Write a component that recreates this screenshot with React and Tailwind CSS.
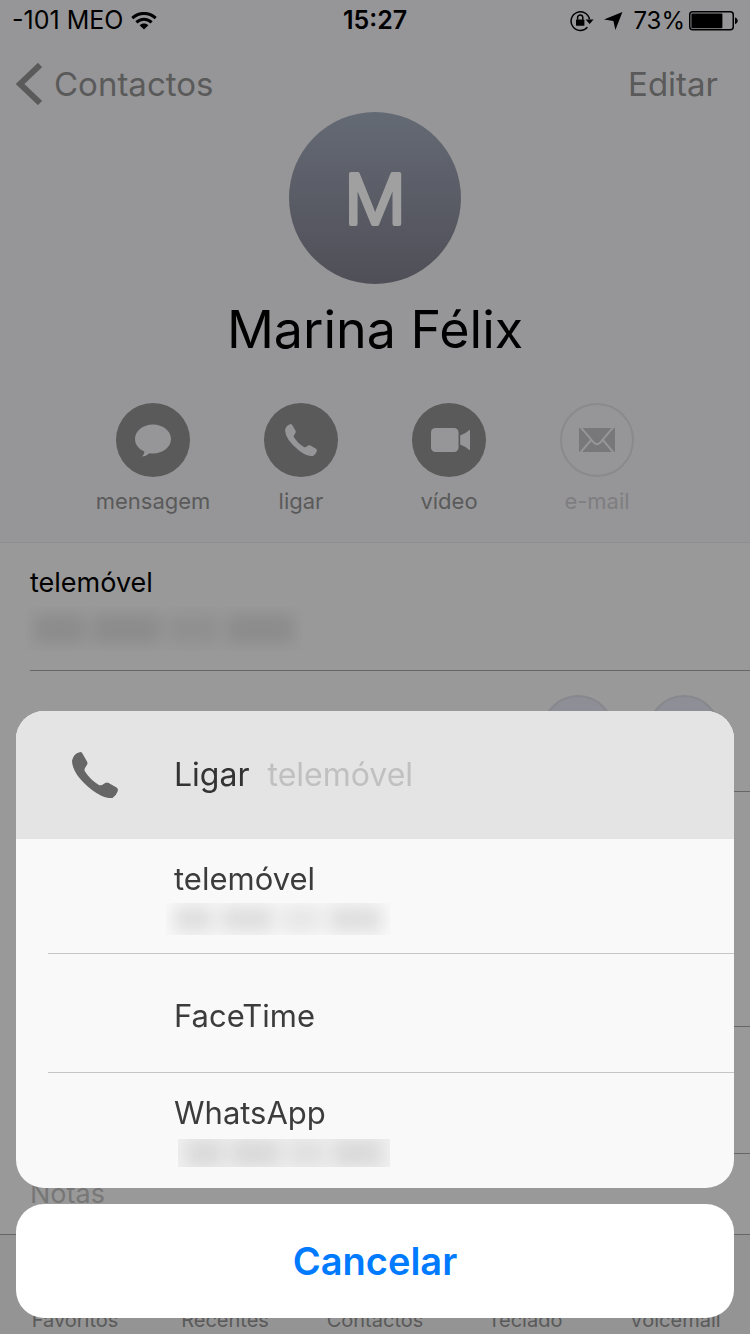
const actions = [
  { label: "mensagem", icon: MessageIcon },
  { label: "ligar", icon: PhoneIcon },
  { label: "vídeo", icon: VideoIcon },
  { label: "e-mail", icon: MailIcon, disabled: true },
];

const tabs = ["Favoritos", "Recentes", "Contactos", "Teclado", "Voicemail"];

function WifiIcon() {
  return (
    <svg width="26" height="18" viewBox="0 0 26 18" fill="none" stroke="black" strokeWidth="3">
      <path d="M1.3 6.2C8 -.2 18 -.2 24.7 6.2" />
      <path d="M5.4 10.4C9.8 6.2 16.2 6.2 20.6 10.4" />
      <path d="M13 17.6L8.6 13.2C11.2 10.9 14.8 10.9 17.4 13.2Z" fill="black" stroke="none" />
    </svg>
  );
}

function RotationLockIcon() {
  return (
    <svg width="24" height="22" viewBox="0 0 24 22" fill="none" stroke="black" strokeWidth="1.5">
      <path d="M17.4 17.2A9.3 9.3 0 1 1 19.5 9.4" />
      <path d="M15.6 9.6H23.6L19.6 14Z" fill="black" stroke="none" />
      <rect x="6" y="9.4" width="8.4" height="6.4" rx=".6" fill="black" stroke="none" />
      <path d="M7.6 9.8V7.6A2.6 2.6 0 0 1 12.8 7.6V9.8" />
    </svg>
  );
}

function LocationIcon() {
  return (
    <svg width="19" height="18" viewBox="0 0 19 18">
      <path d="M18.4 0L11.4 18L9.4 9L0 7.6Z" fill="black" />
    </svg>
  );
}

function BatteryIcon() {
  return (
    <svg width="49" height="20" viewBox="0 0 49 20">
      <rect x=".75" y=".75" width="43.5" height="18" rx="3" fill="none" stroke="black" strokeWidth="1.5" />
      <rect x="2.4" y="2.6" width="31" height="14.6" rx="1" fill="black" />
      <path d="M46 6.4C49.6 7.4 49.6 12.2 46 13.2Z" fill="black" />
    </svg>
  );
}

function MessageIcon() {
  return (
    <svg width="36" height="34" viewBox="0 0 36 34" fill="#969698">
      <path d="M18 1.5C28 1.5 36 8 36 16S28 30.5 18 30.5Q16 30.5 14.4 30.2Q11.2 33.4 7 33.6Q9.6 31.2 9.4 28.6C3.8 26.2 0 21.4 0 16C0 8 8 1.5 18 1.5Z" />
    </svg>
  );
}

function PhoneIcon({ size = 32, color = "#969698" }) {
  return (
    <svg width={size} height={size} viewBox="0 0 46 46" fill={color}>
      <path d="M7.6 .2Q9.4 -.2 10.3 1.3L15 9.5Q16 11.3 15 12.8L13 16Q12 17.6 13 19.5Q18 27.5 26.5 32.7Q28.3 33.8 30 33L33.2 31Q35 30 36.7 31L44.5 35.6Q46.5 37 45.7 39.2Q44 44 40.5 46Q32 47 20 38Q0 22 0 8.4Q1.6 1.8 7.6 .2Z" />
    </svg>
  );
}

function VideoIcon() {
  return (
    <svg width="44" height="24" viewBox="-4 0 44 24" fill="#969698">
      <rect width="27.5" height="24" rx="4.5" />
      <path d="M39 2.8V21.2C39 22.4 38.2 22.2 37.6 21.4C35 18.8 31.8 17.6 29.2 16.4V7.6C31.8 6.4 35 5.2 37.6 2.6C38.2 1.8 39 1.6 39 2.8Z" />
    </svg>
  );
}

function MailIcon() {
  return (
    <svg width="36" height="24" viewBox="0 0 36 24">
      <rect width="36" height="24" fill="#78787a" />
      <path
        d="M1.5 -1L15 14.8Q18 17.6 21 14.8L34.5 -1M1 25L12.2 12M35 25L23.8 12"
        fill="none"
        stroke="#969698"
        strokeWidth="2"
      />
    </svg>
  );
}

// Hidden phone number, only its smudge is visible
function MaskedNumber({ className }) {
  return (
    <span aria-hidden="true" className={`flex items-center overflow-hidden ${className}`}>
      <span className="flex h-7 flex-1 gap-2 px-2 opacity-30 blur-sm">
        <span className="flex-3 bg-current" />
        <span className="flex-4 bg-current" />
        <span className="flex-3 bg-current opacity-70" />
        <span className="flex-4 bg-current" />
      </span>
    </span>
  );
}

function StatusBar() {
  return (
    <div className="grid h-10 grid-cols-3 items-center px-3 pt-0.5 text-[25px] text-black">
      <div className="flex items-center gap-2">
        <span>-101 MEO</span>
        <WifiIcon />
      </div>
      <span className="text-center font-semibold">15:27</span>
      <div className="flex items-center justify-end gap-2.5">
        <RotationLockIcon />
        <LocationIcon />
        <span className="flex items-center gap-1 text-2xl">
          73%
          <BatteryIcon />
        </span>
      </div>
    </div>
  );
}

function ContactPage() {
  return (
    <div className="flex min-h-screen flex-col bg-[#999999]">
      <header className="border-b border-[#8e8e92] bg-[#969698] pb-[25px]">
        <StatusBar />

        <nav className="flex h-18 items-start justify-between pt-5 pr-8 pl-4 text-[33px] leading-12 text-[#5a5a5a]">
          <a href="#contactos" className="flex items-center gap-3">
            <svg width="26" height="42" viewBox="0 0 26 42" fill="none" stroke="#5a5a5a" strokeWidth="6">
              <path d="M24 2L4 21L24 40" />
            </svg>
            Contactos
          </a>
          <button>Editar</button>
        </nav>

        <div className="flex flex-col items-center">
          <div className="size-43 rounded-full bg-linear-to-b from-[#646a74] to-[#504f58]">
            <svg viewBox="0 0 172 172" className="size-full">
              <text
                x="86"
                y="112"
                textAnchor="middle"
                fontSize="68"
                fontWeight="300"
                fill="#a0a0a0"
                stroke="#a0a0a0"
                strokeWidth="4"
                strokeLinejoin="round"
              >
                M
              </text>
            </svg>
          </div>
          <h1 className="mt-3 text-[52px] leading-17 text-black">Marina Félix</h1>
        </div>

        {/* Quick actions */}
        <div className="mt-[39px] flex justify-center">
          {actions.map(({ label, icon: Icon, disabled }) => (
            <button
              key={label}
              disabled={disabled}
              className={`flex w-37 flex-col items-center gap-2 text-[22px] leading-8 ${
                disabled ? "text-[#7e7e80]" : "text-[#5a5a5a]"
              }`}
            >
              <span
                className={`flex size-18.5 items-center justify-center rounded-full ${
                  disabled ? "border-2 border-[#8a8a8c]" : "bg-[#5a5a5a]"
                }`}
              >
                <Icon />
              </span>
              {label}
            </button>
          ))}
        </div>
      </header>

      <main className="flex flex-1 flex-col pl-7.5">
        <div className="h-32 border-b border-[#666666] pt-5">
          <p className="text-[27px] leading-10 text-black">telemóvel</p>
          <MaskedNumber className="-ml-1 mt-1 h-11 w-69 text-[#6c6c6c]" />
        </div>
        <div className="flex h-[121px] items-start justify-end gap-8.5 border-b border-[#666666] pt-6 pr-7.5">
          <button aria-label="Mensagem" className="size-18 rounded-full border-2 border-[#87878d] bg-[#8e8e96]" />
          <button aria-label="Ligar" className="size-18 rounded-full border-2 border-[#87878d] bg-[#8e8e96]" />
        </div>
        <div className="h-[235px] border-b border-[#666666]" />
        <div className="h-[127px] border-b border-[#666666]" />
        <p className="pt-5 text-[27px] leading-10 text-[#777777]">Notas</p>
      </main>

      <footer className="grid h-25 grid-cols-5 items-end border-t border-[#666666] bg-[#949494] text-center text-xl leading-7 text-[#5a5a5a]">
        {tabs.map((tab) => (
          <a key={tab} href={`#${tab.toLowerCase()}`}>
            {tab}
          </a>
        ))}
      </footer>
    </div>
  );
}

function CallSheet() {
  return (
    <div role="dialog" aria-label="Ligar" className="fixed inset-x-0 bottom-0 flex flex-col gap-4 p-4">
      <div className="overflow-hidden rounded-[28px] bg-[#f9f9f9] text-[31px] leading-12 text-[#3c3c3c]">
        <div className="flex h-32 items-center bg-[#e4e4e4] pl-14 text-[32px]">
          <PhoneIcon size={46} color="#666666" />
          <span className="ml-14 text-[#333333]">Ligar</span>
          <span className="ml-4.5 text-[#c0c0c0]">telemóvel</span>
        </div>

        <div className="flex flex-col divide-y divide-[#c6c6c8] pl-8">
          <button className="flex h-[115px] flex-col items-start pt-4 pl-31.5 text-left">
            telemóvel
            <MaskedNumber className="-ml-2 h-8 w-56 text-[#a8a8a8]" />
          </button>
          <button className="flex h-[119px] items-center pt-1.5 pl-31.5 text-left">FaceTime</button>
          <button className="flex h-[115px] flex-col items-start pt-4 pl-31.5 text-left">
            WhatsApp
            <MaskedNumber className="mt-0.5 ml-1 h-7 w-53 bg-[#f0f0f0] text-[#a8a8a8]" />
          </button>
        </div>
      </div>

      <button className="h-[114px] rounded-[28px] bg-white text-[38px] font-semibold text-[#007aff]">
        Cancelar
      </button>
    </div>
  );
}

export default function App() {
  return (
    <div className="font-['Inter','Liberation_Sans',sans-serif]">
      <ContactPage />
      <CallSheet />
    </div>
  );
}
